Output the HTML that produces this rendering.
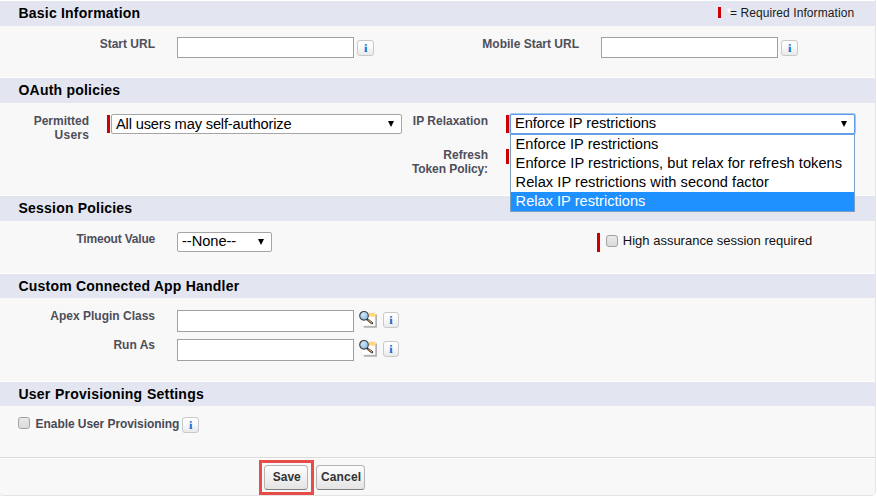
<!DOCTYPE html>
<html lang="en">
<head>
<meta charset="utf-8">
<title>Connected App Edit</title>
<style>
html,body{margin:0;padding:0;background:#fff;}
body{width:877px;height:504px;overflow:hidden;position:relative;font-family:"Liberation Sans",sans-serif;font-size:12px;color:#222;}
#panel{position:absolute;left:-2px;top:0;width:876px;height:495px;background:#f8f8f8;border:1px solid #e6e6e6;border-top:none;border-bottom-color:#e4e4e4;border-radius:0 0 5px 5px;}
.band{position:absolute;left:0;width:875px;background:#e3e6f0;border-top:1px solid #fff;}
.band h3{position:absolute;left:18.5px;top:4px;margin:0;font-size:14px;letter-spacing:0.21px;font-weight:bold;color:#000;white-space:nowrap;line-height:17px;}
.lbl{position:absolute;font-size:12px;font-weight:bold;color:#4e4e5a;text-align:right;white-space:nowrap;line-height:13.6px;}
.txt{position:absolute;white-space:nowrap;}
.inp{position:absolute;box-sizing:border-box;background:#fff;border:1px solid #a0a0a0;}
.lk{position:absolute;width:20px;height:18px;}
.req{position:absolute;width:3px;background:#c00;}
.sel{position:absolute;box-sizing:border-box;background:#fff;border:1px solid #a6a6a6;border-radius:2px;font-size:14.4px;color:#000;white-space:nowrap;}
.sel span{position:absolute;left:4px;}
.arr{position:absolute;width:0;height:0;border-left:3.3px solid transparent;border-right:3.3px solid transparent;border-top:6px solid #000;}
.info{position:absolute;box-sizing:border-box;width:17px;height:16px;border:1px solid #c9c9c9;border-radius:3px;background:linear-gradient(#ffffff,#f9f9f9 45%,#e9e9e9);}
.info svg{position:absolute;left:0;top:0;width:15px;height:14px;overflow:visible;}
.info text{font-family:"Liberation Serif","DejaVu Serif",serif;font-weight:bold;font-size:11.5px;fill:#1b6fd1;}
.cb{position:absolute;box-sizing:border-box;width:12px;height:12px;border:1px solid #a2a2a2;border-radius:3px;background:linear-gradient(#e9e9e9,#dbdbdb);}
.btn{position:absolute;box-sizing:border-box;height:25px;border:1px solid #b5b5b5;border-bottom-color:#7f7f7f;border-radius:3.5px;background:linear-gradient(#fdfdfd,#f1f1f1 50%,#e4e4e4);font-weight:bold;font-size:12px;color:#333;text-align:center;line-height:22px;}
#dd{position:absolute;left:510px;top:134px;width:345px;height:78px;box-sizing:border-box;border:1px solid #7b9ebd;border-top-color:#6aa0e6;background:#fff;font-size:14.64px;color:#000;}
#dd div{position:absolute;left:0;width:343px;height:19px;line-height:19px;white-space:nowrap;text-indent:4.6px;}
</style>
</head>
<body>
<div id="panel"></div>

<!-- section bands -->
<div class="band" style="top:0px;height:25px;"><h3>Basic Information</h3></div>
<div class="band" style="top:77px;height:25px;"><h3>OAuth policies</h3></div>
<div class="band" style="top:195px;height:25px;"><h3>Session Policies</h3></div>
<div class="band" style="top:273px;height:24px;"><h3>Custom Connected App Handler</h3></div>
<div class="band" style="top:381px;height:24px;"><h3 style="word-spacing:0.5px;">User Provisioning Settings</h3></div>

<!-- required legend -->
<div class="req" style="left:718px;top:7px;height:11px;"></div>
<div class="txt" style="left:726.4px;top:6px;font-size:12px;line-height:14px;color:#ffffff;">*</div>
<div class="txt" style="left:730px;top:6px;font-size:12px;line-height:14px;color:#1a1a1a;letter-spacing:0.08px;">= Required Information</div>

<!-- Basic Information row -->
<div class="lbl" style="left:55px;width:100px;top:37.5px;">Start URL</div>
<div class="inp" style="left:177px;top:37px;width:177px;height:21px;"></div>
<div class="info" style="left:357px;top:40px;"><svg viewBox="0 0 15 14"><text x="0" y="0" text-anchor="middle" transform="translate(7.6 11) rotate(0.3) scale(1.2 1)">i</text></svg></div>
<div class="lbl" style="left:429px;width:150px;top:37.5px;">Mobile Start URL</div>
<div class="inp" style="left:601px;top:37px;width:177px;height:21px;"></div>
<div class="info" style="left:781px;top:40px;"><svg viewBox="0 0 15 14"><text x="0" y="0" text-anchor="middle" transform="translate(7.6 11) rotate(0.3) scale(1.2 1)">i</text></svg></div>

<!-- OAuth policies -->
<div class="lbl" style="left:9px;width:80px;top:114.5px;">Permitted</div>
<div class="lbl" style="left:9px;width:80.3px;top:129px;letter-spacing:0.3px;">Users</div>
<div class="req" style="left:107px;top:115px;height:18px;"></div>
<div class="sel" style="left:111px;top:114px;width:291px;height:20px;"><span style="top:0.6px;line-height:17px;font-size:14.67px;letter-spacing:-0.165px;">All users may self-authorize</span><i class="arr" style="left:275.8px;top:5.8px;"></i></div>

<div class="lbl" style="left:388px;width:100px;top:114.5px;">IP Relaxation</div>
<div class="req" style="left:506px;top:115px;height:18px;"></div>
<div class="lbl" style="left:388px;width:100px;top:149px;">Refresh</div>
<div class="lbl" style="left:388px;width:100px;top:163px;letter-spacing:-0.08px;">Token Policy:</div>
<div class="req" style="left:506px;top:149px;height:15px;"></div>
<div class="sel" style="left:510px;top:114px;width:345px;height:20px;border-color:#5f9be8;box-shadow:0 0 0 1px rgba(95,155,232,0.55);"><span style="top:0px;line-height:17px;font-size:14.67px;letter-spacing:-0.09px;">Enforce IP restrictions</span><i class="arr" style="left:329.8px;top:5.8px;"></i></div>
<div id="dd">
  <div style="top:0px;">Enforce IP restrictions</div>
  <div style="top:19px;letter-spacing:0.03px;">Enforce IP restrictions, but relax for refresh tokens</div>
  <div style="top:38px;letter-spacing:0.04px;">Relax IP restrictions with second factor</div>
  <div style="top:57px;height:19px;line-height:19px;background:#1e90ff;color:#fff;">Relax IP restrictions</div>
</div>

<!-- Session Policies -->
<div class="lbl" style="left:55px;width:100px;top:232.5px;letter-spacing:-0.2px;">Timeout Value</div>
<div class="sel" style="left:177px;top:232px;width:95px;height:20px;"><span style="top:0px;line-height:17px;font-size:14.67px;letter-spacing:-0.05px;">--None--</span><i class="arr" style="left:79.8px;top:5.8px;"></i></div>
<div class="req" style="left:597px;top:233px;height:19px;"></div>
<div class="cb" style="left:606px;top:235px;"></div>
<div class="txt" style="left:622.8px;top:233px;font-size:13px;line-height:15px;color:#111;">High assurance session required</div>

<!-- Custom Connected App Handler -->
<div class="lbl" style="left:35px;width:120px;top:309.5px;">Apex Plugin Class</div>
<div class="inp" style="left:177px;top:310px;width:177px;height:22px;"></div>
<div class="lbl" style="left:35px;width:120px;top:339px;">Run As</div>
<div class="inp" style="left:177px;top:339px;width:177px;height:22px;"></div>
<svg class="lk" style="left:358px;top:310px;" viewBox="0 0 20 18">
<defs><radialGradient id="lg1" cx="0.4" cy="0.35" r="0.7"><stop offset="0" stop-color="#cfe7f9"/><stop offset="1" stop-color="#86bbe6"/></radialGradient></defs>
<rect x="5.8" y="4.5" width="13.1" height="13.2" fill="#a8a8a8"/>
<rect x="3.7" y="2.4" width="13.4" height="13.5" fill="#ffffff" stroke="#e9e9e9" stroke-width="0.6"/>
<rect x="10.7" y="3" width="6.2" height="3.6" fill="#ffd673"/>
<line x1="9.2" y1="9.4" x2="14.0" y2="13.1" stroke="#222" stroke-width="2.3" stroke-linecap="round"/>
<line x1="9.0" y1="10.0" x2="13.5" y2="13.5" stroke="#b8620e" stroke-width="1" stroke-linecap="round"/>
<line x1="10.2" y1="9.8" x2="13.8" y2="12.6" stroke="#f2f2f2" stroke-width="0.7" stroke-linecap="round"/>
<circle cx="6" cy="5.8" r="4.3" fill="url(#lg1)" stroke="#3d3d3d" stroke-width="1.1"/>
</svg>
<svg class="lk" style="left:358px;top:339px;" viewBox="0 0 20 18">
<defs><radialGradient id="lg2" cx="0.4" cy="0.35" r="0.7"><stop offset="0" stop-color="#cfe7f9"/><stop offset="1" stop-color="#86bbe6"/></radialGradient></defs>
<rect x="5.8" y="4.5" width="13.1" height="13.2" fill="#a8a8a8"/>
<rect x="3.7" y="2.4" width="13.4" height="13.5" fill="#ffffff" stroke="#e9e9e9" stroke-width="0.6"/>
<rect x="10.7" y="3" width="6.2" height="3.6" fill="#ffd673"/>
<line x1="9.2" y1="9.4" x2="14.0" y2="13.1" stroke="#222" stroke-width="2.3" stroke-linecap="round"/>
<line x1="9.0" y1="10.0" x2="13.5" y2="13.5" stroke="#b8620e" stroke-width="1" stroke-linecap="round"/>
<line x1="10.2" y1="9.8" x2="13.8" y2="12.6" stroke="#f2f2f2" stroke-width="0.7" stroke-linecap="round"/>
<circle cx="6" cy="5.8" r="4.3" fill="url(#lg2)" stroke="#3d3d3d" stroke-width="1.1"/>
</svg>
<div class="info" style="left:383px;top:312px;width:16px;"><svg viewBox="0 0 15 14"><text x="0" y="0" text-anchor="middle" transform="translate(7 11) rotate(0.3) scale(1.2 1)">i</text></svg></div>
<div class="info" style="left:383px;top:341px;width:16px;"><svg viewBox="0 0 15 14"><text x="0" y="0" text-anchor="middle" transform="translate(7 11) rotate(0.3) scale(1.2 1)">i</text></svg></div>

<!-- User Provisioning -->
<div class="cb" style="left:18px;top:417px;"></div>
<div class="txt" style="left:35.6px;top:417px;font-size:12px;font-weight:bold;line-height:14px;color:#4a4a56;letter-spacing:-0.07px;">Enable User Provisioning</div>
<div class="info" style="left:182px;top:417px;"><svg viewBox="0 0 15 14"><text x="0" y="0" text-anchor="middle" transform="translate(7.6 11) rotate(0.3) scale(1.2 1)">i</text></svg></div>

<!-- buttons -->
<div style="position:absolute;left:0;top:457px;width:875px;height:1px;background:#dbdbdb;border-bottom:1px solid #fff;"></div>
<div style="position:absolute;left:259px;top:460px;width:55px;height:35px;box-sizing:border-box;border:3px solid #e84c48;"></div>
<div class="btn" style="left:264px;top:465px;width:44px;text-indent:1.5px;">Save</div>
<div class="btn" style="left:316px;top:465px;width:49px;letter-spacing:0.15px;text-indent:1.2px;">Cancel</div>
</body>
</html>
